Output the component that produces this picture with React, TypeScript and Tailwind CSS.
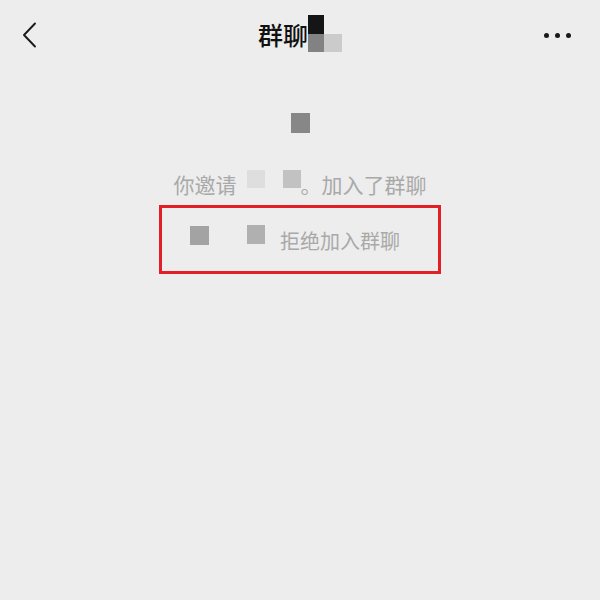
const font = { fontFamily: '"Noto Sans CJK SC", "Noto Sans", sans-serif' };

function Swatch({ className }: { className: string }) {
  return <span className={`block shrink-0 ${className}`} />;
}

export default function App() {
  return (
    <div className="flex h-[600px] w-[600px] flex-col bg-[#ededed] text-[#a9a9a9]" style={font}>
      {/* header */}
      <header className="grid h-[70px] grid-cols-[1fr_auto_1fr] items-center px-[16px]">
        <svg width="24" height="28" viewBox="0 0 24 28" fill="none" className="ml-[5px]">
          <polyline points="14,2.5 3,14 14,25.5" stroke="#1a1a1a" strokeWidth="1.9" strokeLinecap="round" strokeLinejoin="round" />
        </svg>
        <div className="flex items-start">
          <span className="text-[25px] leading-[30px] font-medium text-[#111]">群聊</span>
          <div className="mt-[-4px] flex flex-col">
            <Swatch className="h-[19px] w-[16px] bg-[#151515]" />
            <div className="flex">
              <Swatch className="h-[18px] w-[16px] bg-[#828282]" />
              <Swatch className="h-[18px] w-[18px] bg-[#cbcbcb]" />
            </div>
          </div>
        </div>
        <div className="flex justify-end gap-[6px] pr-[13px]">
          <span className="h-[5px] w-[5px] rounded-full bg-[#1a1a1a]" />
          <span className="h-[5px] w-[5px] rounded-full bg-[#1a1a1a]" />
          <span className="h-[5px] w-[5px] rounded-full bg-[#1a1a1a]" />
        </div>
      </header>

      {/* system messages */}
      <main className="flex flex-col items-center">
        <Swatch className="mt-[43px] h-[20px] w-[19px] bg-[#878787]" />

        <div className="mt-[37px] flex items-start text-[21px] leading-[28px]">
          <span>你邀请</span>
          <Swatch className="ml-[10px] h-[18px] w-[18px] bg-[#dedede]" />
          <Swatch className="ml-[18px] h-[18px] w-[18px] bg-[#c2c2c2]" />
          <span>。加入了群聊</span>
        </div>

        <div className="mt-[7px] flex h-[69px] w-[282px] items-start border-[3px] border-[#e01f26] pl-[28px] pr-[4px]">
          <Swatch className="mt-[18px] h-[19px] w-[19px] bg-[#a3a3a3]" />
          <Swatch className="ml-[38px] mt-[17px] h-[19px] w-[18px] bg-[#b0b0b0]" />
          <span className="ml-[15px] mt-[19px] text-[20px] leading-[28px]">拒绝加入群聊</span>
        </div>
      </main>
    </div>
  );
}
